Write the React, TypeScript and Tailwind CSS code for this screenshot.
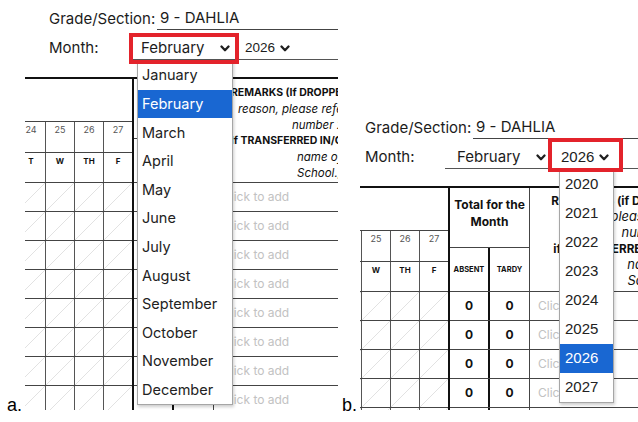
import React from "react";

const MONTHS = [
  "January",
  "February",
  "March",
  "April",
  "May",
  "June",
  "July",
  "August",
  "September",
  "October",
  "November",
  "December",
];
const YEARS = ["2020", "2021", "2022", "2023", "2024", "2025", "2026", "2027"];
const DATES = ["24", "25", "26", "27"];
const DAYS = ["T", "W", "TH", "F"];
const ROWS = [0, 1, 2, 3, 4, 5, 6, 7];

type Variant = "month" | "year";

const Chevron = () => (
  <svg width="10" height="7" viewBox="0 0 10 7" className="shrink-0">
    <path
      d="M1.5 1.5 5 5.2l3.5-3.7"
      fill="none"
      stroke="#1f1f1f"
      strokeWidth="2.3"
      strokeLinecap="round"
      strokeLinejoin="round"
    />
  </svg>
);

// light "/" diagonal in the blank day cells
const hatch =
  "bg-[linear-gradient(to_bottom_right,transparent_48.5%,#e2e2e2_50%,transparent_51.5%)]";

const MonthList = () => (
  <div className="absolute left-[112px] top-[60px] w-[96px] border border-[#a6a6a6] bg-white shadow-[1px_2px_3px_rgba(0,0,0,0.2)]">
    {MONTHS.map((m) => (
      <div
        key={m}
        className={`flex h-[28.6px] items-center pl-[4px] text-[14.5px] ${
          m === "February" ? "bg-[#1967d2] text-white" : "text-[#222]"
        }`}
      >
        {m}
      </div>
    ))}
  </div>
);

const YearList = () => (
  <div className="absolute left-[218px] top-[60px] w-[55px] border border-[#a6a6a6] bg-white font-[family-name:'Liberation_Sans',Arial,sans-serif] shadow-[1px_2px_3px_rgba(0,0,0,0.2)]">
    {YEARS.map((y) => (
      <div
        key={y}
        className={`flex h-[29px] items-center pl-[5px] text-[15px] ${
          y === "2026" ? "bg-[#1967d2] text-white" : "text-[#222]"
        }`}
      >
        {y}
      </div>
    ))}
  </div>
);

function RemarksHead({ big }: { big: boolean }) {
  const b = big ? "text-[11.75px] font-bold" : "text-[10.5px] font-bold";
  const it = big ? "text-[12.9px] italic" : "text-[11.5px] italic";
  return (
    <div className="h-[103px] pt-[3px] text-center leading-[16px]">
      <div className="whitespace-nowrap">
        <span className={b}>{big ? "REMARK/S (if DROPPED OUT," : "REMARKS (If DROPPED OUT,"}</span>
        <span className={it}> state</span>
      </div>
      <div className={`whitespace-nowrap ${it}`}>reason, please refer to legend</div>
      <div className={`whitespace-nowrap ${it}`}>number 2.</div>
      <div className={`whitespace-nowrap ${b}`}>
        {big ? "if TRANSFERRED IN/OUT, write the" : "If TRANSFERRED IN/OUT, write the"}
      </div>
      <div className={`whitespace-nowrap ${it}`}>name of</div>
      <div className={`whitespace-nowrap ${it}`}>School.)</div>
    </div>
  );
}

function Sheet({ variant }: { variant: Variant }) {
  const isYear = variant === "year";
  return (
    <div className="relative w-[460px] text-[#1c1c1c]">
      {/* form header */}
      <div className="pl-[24px] pt-[8px]">
        <div className="flex h-[22px] items-center text-[15px]">
          <span className="w-[108px] shrink-0 whitespace-nowrap">Grade/Section:</span>
          <div className="flex h-full flex-1 items-center border-b border-[#444] pl-[3px]">
            9 - DAHLIA
          </div>
        </div>
        <div className="mt-[7px] flex h-[23px] items-center text-[15px]">
          <span className="w-[80px] shrink-0">Month:</span>
          <div className="flex h-full w-[104px] shrink-0 items-center justify-between border-b border-[#555] pl-[12px] pr-[3px]">
            <span>February</span>
            <Chevron />
          </div>
          <div className="flex h-full flex-1 items-center gap-[5px] border-b border-[#555] pl-[12px]">
            <span
              className={`font-[family-name:'Liberation_Sans',Arial,sans-serif] ${
                isYear ? "text-[15px]" : "text-[13.5px]"
              }`}
            >
              2026
            </span>
            <Chevron />
          </div>
        </div>
      </div>

      {/* attendance table */}
      <div className="ml-[-8px] mt-[17px] flex border-t-2 border-[#111]">
        <div className="flex flex-col">
          <div className="h-[42px]" />
          <div className="flex h-[31px] border-t border-[#444]">
            {DATES.map((d, i) => (
              <div
                key={d}
                className={`pt-[2px] text-center text-[9px] leading-[12px] text-[#555] ${
                  i < 3 ? "w-[29px] border-r border-[#555]" : "w-[28px]"
                }`}
              >
                {d}
              </div>
            ))}
          </div>
          <div className="flex h-[30px] border-t border-[#444]">
            {DAYS.map((d, i) => (
              <div
                key={d}
                className={`pt-[2px] text-center text-[8px] font-bold leading-[12px] text-[#111] ${
                  i < 3 ? "w-[29px] border-r border-[#555]" : "w-[28px]"
                }`}
              >
                {d}
              </div>
            ))}
          </div>
          {ROWS.map((r) => (
            <div key={r} className="flex h-[29px] border-t border-[#444]">
              {DATES.map((d, i) => (
                <div
                  key={d}
                  className={`${hatch} ${i < 3 ? "w-[29px] border-r border-[#555]" : "w-[28px]"}`}
                />
              ))}
            </div>
          ))}
        </div>

        <div className="w-[2px] bg-[#111]" />

        <div className="flex w-[79px] flex-col">
          <div className="h-[59px] pt-[8px] text-center text-[12px] font-bold leading-[17px] text-[#111]">
            Total for the
            <br />
            Month
          </div>
          <div className="flex h-[44px] border-t border-[#444] text-[7.5px] font-bold text-[#111]">
            <div className="flex w-[38px] items-center justify-center">ABSENT</div>
            <div className="w-[2px] bg-[#111]" />
            <div className="flex flex-1 items-center justify-center">TARDY</div>
          </div>
          {ROWS.map((r) => (
            <div key={r} className="flex h-[29px] border-t border-[#444] text-[12px] font-bold text-[#111]">
              <div className="flex w-[38px] items-center justify-center">0</div>
              <div className="w-[2px] bg-[#111]" />
              <div className="flex flex-1 items-center justify-center">0</div>
            </div>
          ))}
        </div>

        <div
          className={`flex flex-col border-l border-[#444] text-[#111] ${
            isYear ? "w-[246px]" : "w-[212px]"
          }`}
        >
          <RemarksHead big={isYear} />
          {ROWS.map((r) => (
            <div
              key={r}
              className="flex h-[29px] items-center border-t border-[#444] pl-[8px] text-[12px] text-[#c2c2c2]"
            >
              Click to add
            </div>
          ))}
        </div>
      </div>

      {isYear ? <YearList /> : <MonthList />}

      {/* red highlight annotation */}
      {isYear ? (
        <div className="absolute left-[207px] top-[29px] h-[34px] w-[75px] border-4 border-[#e3232b]" />
      ) : (
        <div className="absolute left-[104px] top-[33px] h-[31px] w-[110px] border-4 border-[#e3232b]" />
      )}
    </div>
  );
}

export default function App() {
  return (
    <div className="flex h-[422px] w-[638px] overflow-hidden bg-white font-[family-name:Inter,'Liberation_Sans',sans-serif]">
      <div className="flex w-[25px] shrink-0 items-end pb-[7px] pl-[7px] font-[family-name:'Liberation_Sans',Arial,sans-serif] text-[18px] leading-[20px] text-black">
        a.
      </div>
      <div className="relative h-[410px] w-[313px] shrink-0 overflow-hidden">
        <Sheet variant="month" />
      </div>
      <div className="flex w-[22px] shrink-0 items-end pb-[7px] pl-[4px] font-[family-name:'Liberation_Sans',Arial,sans-serif] text-[18px] leading-[20px] text-black">
        b.
      </div>
      <div className="relative mt-[109px] h-[301px] w-[278px] shrink-0 overflow-hidden">
        <div className="ml-[-19px]">
          <Sheet variant="year" />
        </div>
      </div>
    </div>
  );
}
